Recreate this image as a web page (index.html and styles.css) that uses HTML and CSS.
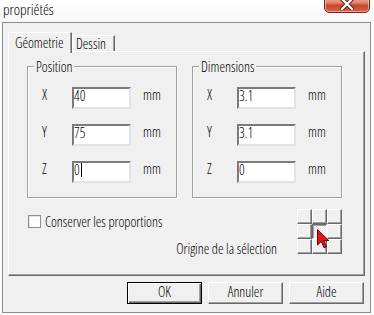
FILE: index.html
```html
<!DOCTYPE html>
<html lang="fr">
<head>
<meta charset="utf-8">
<title>propriétés</title>
<link rel="stylesheet" href="styles.css">
</head>
<body>
<div class="window">
  <div class="titlebar">
    <span class="title">propriétés</span>
    <span class="close">
      <svg width="14" height="12" viewBox="0 0 14 12"><path d="M2 1 L12 11 M12 1 L2 11" stroke="#5a2418" stroke-width="4.2" stroke-linecap="square"/><path d="M2 1 L12 11 M12 1 L2 11" stroke="#ffffff" stroke-width="2.2" stroke-linecap="square"/></svg>
    </span>
  </div>
  <div class="frame">
    <div class="tabs">
      <div class="tab active">Géometrie</div>
      <div class="tab">Dessin</div>
    </div>
    <div class="panel">
      <div class="groups">
        <div class="group">
          <span class="legend">Position</span>
          <div class="rows">
            <span class="lbl">X</span><span class="field">40</span><span class="unit">mm</span>
            <span class="lbl">Y</span><span class="field">75</span><span class="unit">mm</span>
            <span class="lbl">Z</span><span class="field">0<span class="caret"></span></span><span class="unit">mm</span>
          </div>
        </div>
        <div class="group">
          <span class="legend">Dimensions</span>
          <div class="rows">
            <span class="lbl">X</span><span class="field">3.1</span><span class="unit">mm</span>
            <span class="lbl">Y</span><span class="field">3.1</span><span class="unit">mm</span>
            <span class="lbl">Z</span><span class="field">0</span><span class="unit">mm</span>
          </div>
        </div>
      </div>
      <div class="bottom">
        <div class="check"><span class="box"></span><span>Conserver les proportions</span></div>
        <div class="origin">
          <span class="origin-text">Origine de la sélection</span>
          <div class="grid">
            <span class="cell"></span><span class="cell"></span><span class="cell"></span>
            <span class="cell"></span><span class="cell pressed"></span><span class="cell"></span>
            <span class="cell"></span><span class="cell"></span><span class="cell"></span>
            <svg class="cursor" width="13" height="20" viewBox="0 0 13 20"><path d="M0.5 0.5 L0.5 16 L4.3 12.4 L7 18.8 L9.4 17.8 L6.8 11.5 L11.8 11.5 Z" fill="#e3141b" stroke="#5b0a0a" stroke-width="1" stroke-linejoin="round"/></svg>
          </div>
        </div>
      </div>
    </div>
    <div class="buttons">
      <div class="btn default">OK</div>
      <div class="btn">Annuler</div>
      <div class="btn">Aide</div>
    </div>
  </div>
</div>
</body>
</html>
```

FILE: styles.css
```css
html, body {
  margin: 0;
  padding: 0;
  background: #ffffff;
}

body {
  font-family: "Open Sans", "Liberation Sans", Arial, sans-serif;
  font-stretch: 75%;
  font-weight: 360;
  font-size: 14px;
  color: #000;
}

.window {
  width: 374px;
  height: 315px;
  overflow: hidden;
  background: #fbfbfb;
}

.titlebar {
  height: 22px;
  display: flex;
  justify-content: space-between;
  align-items: flex-start;
  background: linear-gradient(#ffffff, #f7f7f7);
}

.title {
  font-size: 15px;
  line-height: 17px;
  padding-left: 3px;
  padding-top: 1px;
  color: #000;
}

.close {
  width: 46px;
  height: 18px;
  margin-top: -5px;
  margin-right: 4px;
  box-sizing: border-box;
  border: 1px solid #6e2a1c;
  border-radius: 0 0 5px 5px;
  background: linear-gradient(#f1b3a3 0%, #e08a73 40%, #c8452c 60%, #d6654a 100%);
  box-shadow: inset 0 0 0 1px rgba(255, 210, 200, 0.6);
  display: flex;
  align-items: center;
  justify-content: center;
}

.frame {
  width: 369px;
  margin-left: 2px;
  box-sizing: border-box;
  border: 1px solid #8c8c8c;
  background: #f0f0f0;
  padding: 9px 5px 8px 5px;
}

.tabs {
  display: flex;
  align-items: flex-end;
  height: 19px;
}

.tab {
  box-sizing: border-box;
  border-top: 1px solid #fff;
  border-left: 1px solid #fff;
  border-right: 1px solid #696969;
  box-shadow: inset -1px 0 0 #a0a0a0;
  line-height: 15px;
  background: #f0f0f0;
}

.tab.active {
  position: relative;
  z-index: 1;
  width: 64px;
  height: 21px;
  padding: 2px 0 3px 6px;
  margin-bottom: -2px;
}

.tab:not(.active) {
  width: 43px;
  height: 16px;
  padding-left: 3px;
}

.panel {
  box-sizing: border-box;
  height: 225px;
  border-top: 1px solid #fff;
  border-left: 1px solid #fff;
  border-right: 1px solid #696969;
  border-bottom: 1px solid #696969;
  box-shadow: inset -1px -1px 0 #a0a0a0;
  padding: 14px 22px 0 18px;
}

.groups {
  display: flex;
  gap: 15px;
}

.group {
  position: relative;
  box-sizing: border-box;
  width: 150px;
  height: 132px;
  border: 1px solid #a0a0a0;
  box-shadow: 1px 1px 0 #fff, inset 1px 1px 0 #fff;
  padding: 20px 0 0 14px;
}

.legend {
  position: absolute;
  top: -8px;
  left: 6px;
  padding: 0 2px;
  line-height: 15px;
  background: #f0f0f0;
}

.rows {
  display: grid;
  grid-template-columns: 30px 59px auto;
  grid-auto-rows: 22px;
  row-gap: 15px;
  align-items: start;
  line-height: 16px;
}

.unit {
  padding-left: 12px;
}

.field {
  box-sizing: border-box;
  height: 22px;
  width: 59px;
  background: #fff;
  border-top: 2px solid #7a7a7a;
  border-left: 2px solid #7a7a7a;
  border-right: 2px solid #e3e3e3;
  border-bottom: 2px solid #e3e3e3;
  padding-left: 0;
  line-height: 13px;
  display: flex;
  align-items: flex-start;
}

.caret {
  display: inline-block;
  width: 1px;
  height: 14px;
  background: #000;
  margin-left: 1px;
}

.bottom {
  display: flex;
  justify-content: space-between;
  align-items: flex-start;
  margin-top: 11px;
}

.check {
  display: flex;
  align-items: center;
  gap: 4px;
  margin-top: 6px;
  margin-left: 1px;
  line-height: 13px;
}

.box {
  box-sizing: border-box;
  width: 13px;
  height: 13px;
  background: #fff;
  border: 1px solid #8f8f8f;
  box-shadow: inset 1px 1px 0 #e6e6e6;
}

.origin {
  display: flex;
  align-items: flex-end;
  gap: 20px;
}

.origin-text {
  line-height: 15px;
  margin-bottom: -2px;
}

.grid {
  position: relative;
  display: grid;
  grid-template-columns: repeat(3, 15px);
  grid-template-rows: repeat(3, 15px);
}

.cell {
  box-sizing: border-box;
  background: #f0f0f0;
  border-top: 1px solid #fff;
  border-left: 1px solid #fff;
  border-right: 1px solid #696969;
  border-bottom: 1px solid #696969;
  box-shadow: inset -1px -1px 0 #a0a0a0;
}

.cell.pressed {
  border-top: 1px solid #696969;
  border-left: 1px solid #696969;
  border-right: 1px solid #fff;
  border-bottom: 1px solid #fff;
  box-shadow: inset 1px 1px 0 #a0a0a0;
  background-color: #fff;
  background-image: repeating-conic-gradient(#ffffff 0 25%, #e4e4e4 0 50%);
  background-size: 2px 2px;
}

.cursor {
  position: absolute;
  left: 20px;
  top: 20px;
}

.buttons {
  display: flex;
  justify-content: flex-end;
  gap: 6px;
  margin-top: 6px;
  margin-right: 1px;
}

.btn {
  box-sizing: border-box;
  width: 75px;
  height: 22px;
  border-top: 1px solid #fff;
  border-left: 1px solid #fff;
  border-right: 1px solid #696969;
  border-bottom: 1px solid #696969;
  box-shadow: inset -1px -1px 0 #a0a0a0;
  text-align: center;
  line-height: 18px;
  padding-bottom: 2px;
}

.btn.default {
  border: 1px solid #000;
  box-shadow: inset 1px 1px 0 #fff, inset -1px -1px 0 #696969, inset -2px -2px 0 #a0a0a0;
}
```
